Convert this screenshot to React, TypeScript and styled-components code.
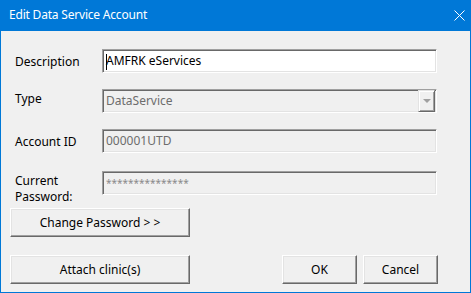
import React from "react";
import styled, { createGlobalStyle, css } from "styled-components";

const Global = createGlobalStyle`
  html, body { margin: 0; padding: 0; background: #ffffff; }
  * { box-sizing: border-box; }
`;

const FONT = `"Noto Sans", "Open Sans", Arial, sans-serif`;

const Window = styled.div`
  width: 471px;
  height: 293px;
  background: #0078d7;
  padding: 0 1px 1px 1px;
  display: flex;
  flex-direction: column;
  font-family: ${FONT};
  font-size: 12px;
  overflow: hidden;
`;

const TitleBar = styled.div`
  height: 31px;
  flex: none;
  display: flex;
  align-items: center;
  justify-content: space-between;
  padding: 0 9px 0 8px;
  color: #ffffff;
  font-size: 12px;
`;

const Title = styled.span`
  line-height: 16px;
  margin-top: -1px;
  letter-spacing: -0.2px;
`;

const CloseIcon = styled.svg`
  width: 11px;
  height: 11px;
  margin-top: -1px;
  margin-right: -4px;
`;

const Content = styled.div`
  flex: 1;
  min-height: 0;
  background: #f0f0f0;
  padding: 18px 32px 8px 9px;
  display: flex;
  flex-direction: column;
`;

const FieldRow = styled.div<{ $gap: number }>`
  display: flex;
  align-items: flex-start;
  height: 24px;
  flex: none;
  padding-left: 5px;
  padding-right: 1px;
  margin-bottom: ${(p) => p.$gap}px;
`;

const Label = styled.div<{ $offset: number }>`
  width: 87px;
  flex: none;
  color: #000000;
  line-height: 16px;
  padding-top: ${(p) => p.$offset}px;
`;

const sunken = css`
  border-style: solid;
  border-width: 1px;
  border-color: #a0a0a0 #ffffff #ffffff #a0a0a0;
  box-shadow: inset 1px 1px 0 #696969, inset -1px -1px 0 #e3e3e3;
`;

const TextBox = styled.div<{ $enabled?: boolean; $small?: boolean }>`
  ${sunken};
  flex: 1;
  height: 24px;
  display: flex;
  align-items: center;
  padding: 0 3px 0 3px;
  background: ${(p) => (p.$enabled ? "#ffffff" : "#f0f0f0")};
  color: ${(p) => (p.$enabled ? "#000000" : p.$small ? "#8a8a8a" : "#6d6d6d")};
  font-size: ${(p) => (p.$small ? "10px" : "12px")};
  line-height: 16px;
  position: relative;
`;

const Caret = styled.span`
  position: absolute;
  left: 3px;
  top: 4px;
  width: 1px;
  height: 16px;
  background: #000;
`;

const Combo = styled.div`
  ${sunken};
  flex: 1;
  height: 24px;
  display: flex;
  align-items: center;
  justify-content: space-between;
  padding: 1px 1px 1px 3px;
  background: #f0f0f0;
  color: #6d6d6d;
  line-height: 16px;
`;

const DropButton = styled.div`
  width: 17px;
  height: 22px;
  display: flex;
  align-items: center;
  justify-content: center;
  background: #f0f0f0;
  border-style: solid;
  border-width: 1px;
  border-color: #e3e3e3 #696969 #696969 #e3e3e3;
  box-shadow: inset 1px 1px 0 #ffffff, inset -1px -1px 0 #a0a0a0;
`;

const Arrow = styled.span`
  width: 0;
  height: 0;
  border-left: 4px solid transparent;
  border-right: 4px solid transparent;
  border-top: 4px solid #a0a0a0;
`;

const ButtonRow = styled.div<{ $gap: number }>`
  display: flex;
  flex: none;
  align-items: center;
  justify-content: space-between;
  margin-bottom: ${(p) => p.$gap}px;
`;

const ButtonGroup = styled.div`
  display: flex;
  gap: 6px;
`;

const Button = styled.button<{ $w: number }>`
  width: ${(p) => p.$w}px;
  height: 29px;
  padding: 0;
  font-family: ${FONT};
  font-size: 12px;
  color: #000;
  background: #f0f0f0;
  border-style: solid;
  border-width: 1px;
  border-color: #ffffff #696969 #696969 #ffffff;
  box-shadow: inset -1px -1px 0 #a0a0a0, inset 1px 1px 0 #e3e3e3;
  display: flex;
  align-items: center;
  justify-content: center;
  line-height: 16px;
`;

export default function App() {
  return (
    <>
      <Global />
      <Window>
        <TitleBar>
          <Title>Edit Data Service Account</Title>
          <CloseIcon viewBox="0 0 11 11">
            <path d="M0.5 0.5 L10.5 10.5 M10.5 0.5 L0.5 10.5" stroke="#ffffff" strokeWidth="1" fill="none" />
          </CloseIcon>
        </TitleBar>
        <Content>
          <FieldRow $gap={16}>
            <Label $offset={5}>Description</Label>
            <TextBox $enabled>
              <Caret />
              AMFRK eServices
            </TextBox>
          </FieldRow>
          <FieldRow $gap={16}>
            <Label $offset={2}>Type</Label>
            <Combo>
              <span>DataService</span>
              <DropButton>
                <Arrow />
              </DropButton>
            </Combo>
          </FieldRow>
          <FieldRow $gap={18}>
            <Label $offset={5}>Account ID</Label>
            <TextBox>000001UTD</TextBox>
          </FieldRow>
          <FieldRow $gap={13}>
            <Label $offset={2}>
              Current
              <br />
              Password:
            </Label>
            <TextBox $small>***************</TextBox>
          </FieldRow>
          <ButtonRow $gap={18}>
            <Button $w={180}>Change Password &gt; &gt;</Button>
          </ButtonRow>
          <ButtonRow $gap={0}>
            <Button $w={180}>Attach clinic(s)</Button>
            <ButtonGroup>
              <Button $w={75}>OK</Button>
              <Button $w={75}>Cancel</Button>
            </ButtonGroup>
          </ButtonRow>
        </Content>
      </Window>
    </>
  );
}
